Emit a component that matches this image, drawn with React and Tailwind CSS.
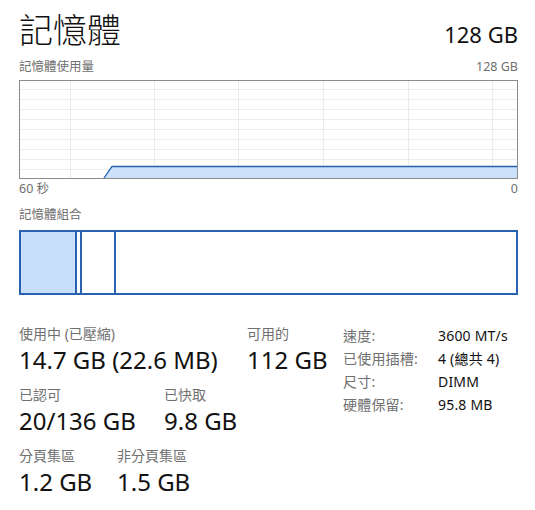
import React from 'react';

const FONT = { fontFamily: '"Noto Sans", "Noto Sans CJK TC", sans-serif' };

const vLines = [51, 135, 219, 304, 389, 473];
const hLines = [9.5, 19.5, 29.5, 39.5, 49.5, 59.5, 69.5, 79.5, 89.5];

function UsageChart() {
  return (
    <svg width="499" height="99" viewBox="0 0 499 99" className="block">
      <rect x="0" y="0" width="499" height="99" fill="#ffffff" />
      {hLines.map(y => (
        <line key={y} x1="0" x2="499" y1={y} y2={y} stroke="#ececec" strokeWidth="1" />
      ))}
      {vLines.map(x => (
        <line key={x} x1={x + 0.5} x2={x + 0.5} y1="0" y2="99" stroke="#ececec" strokeWidth="1" />
      ))}
      <polygon points="85,98 93,86 498,86 498,98" fill="#c7dffb" fillOpacity="0.9" />
      <polyline points="85,98 93,86.5 498,86.5" fill="none" stroke="#2560ad" strokeWidth="1.3" />
      <rect x="0.5" y="0.5" width="498" height="98" fill="none" stroke="#8b8b8b" strokeWidth="1" />
    </svg>
  );
}

function Stat({ label, value, className = '' }) {
  return (
    <div className={className}>
      <div className="text-[14px] leading-[20px] text-[#707070]">{label}</div>
      <div className="text-[24px] leading-[32px] text-[#111]">{value}</div>
    </div>
  );
}

const specs = [
  ['速度:', '3600 MT/s'],
  ['已使用插槽:', '4 (總共 4)'],
  ['尺寸:', 'DIMM'],
  ['硬體保留:', '95.8 MB'],
];

export default function App() {
  return (
    <div className="w-[535px] h-[510px] bg-white pl-[19px] pr-[17px] pt-[8px]" style={FONT}>
      <div className="flex items-baseline justify-between">
        <h1 className="text-[34px] leading-[44px] font-light text-[#111]">記憶體</h1>
        <span className="text-[22px] text-[#111]">128 GB</span>
      </div>
      <div className="flex justify-between text-[12.5px] leading-[18px] text-[#707070] mt-[6px]">
        <span>記憶體使用量</span>
        <span>128 GB</span>
      </div>
      <div className="mt-[4px]">
        <UsageChart />
      </div>
      <div className="flex justify-between text-[12.5px] leading-[18px] text-[#707070] mt-[1px]">
        <span>60 秒</span>
        <span>0</span>
      </div>
      <div className="text-[12.5px] leading-[18px] text-[#707070] mt-[8px]">記憶體組合</div>
      <div className="mt-[6px] h-[65px] border-2 border-[#2862b0] flex">
        <div className="w-[56px] bg-[#c7dffb] border-r-2 border-[#2862b0]" />
        <div className="w-[5px] border-r-2 border-[#2862b0]" />
        <div className="w-[34px] border-r-2 border-[#2862b0]" />
        <div className="flex-1" />
      </div>

      <div className="flex mt-[29px]">
        <div className="w-[324px]">
          <div className="flex">
            <Stat className="w-[228px]" label="使用中 (已壓縮)" value="14.7 GB (22.6 MB)" />
            <Stat label="可用的" value="112 GB" />
          </div>
          <div className="flex mt-[9px]">
            <Stat className="w-[145px]" label="已認可" value="20/136 GB" />
            <Stat label="已快取" value="9.8 GB" />
          </div>
          <div className="flex mt-[9px]">
            <Stat className="w-[98px]" label="分頁集區" value="1.2 GB" />
            <Stat label="非分頁集區" value="1.5 GB" />
          </div>
        </div>
        <div className="flex flex-col text-[14px] leading-[23px] tracking-[0.2px]">
          {specs.map(([k, v]) => (
            <div key={k} className="flex">
              <span className="w-[95px] text-[#707070]">{k}</span>
              <span className="text-[#111]">{v}</span>
            </div>
          ))}
        </div>
      </div>
    </div>
  );
}
